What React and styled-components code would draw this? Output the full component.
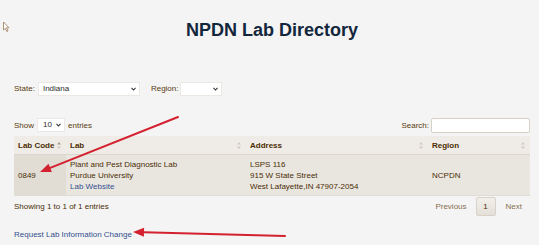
import React from 'react'
import styled, { createGlobalStyle } from 'styled-components'

const GlobalStyle = createGlobalStyle`
  html, body {
    margin: 0;
    padding: 0;
    background: #f4f4f4;
    font-family: "Liberation Sans", Arial, sans-serif;
  }
`

export const Page = styled.div`
  position: relative;
  width: 539px;
  height: 245px;
  box-sizing: border-box;
  padding: 0 9px 0 14px;
  overflow: hidden;
`

export const Title = styled.h1`
  margin: 17px 0 0;
  height: 26px;
  text-align: center;
  font-size: 18px;
  line-height: 26px;
  font-weight: bold;
  color: #12263c;
`

export const FilterRow = styled.div`
  display: flex;
  align-items: center;
  margin-top: 38px;
  height: 15px;
  font-size: 8px;
  color: #5a3a0e;
`

export const Label = styled.span`
  margin-right: ${p => p.gap || 3}px;
`

export const SelectWrap = styled.div`
  position: relative;
  width: ${p => p.w}px;
  height: 14px;
  margin-right: ${p => p.mr || 0}px;
  background: #ffffff;
  border: 1px solid #ece9e4;
  box-sizing: border-box;
  font-size: 8px;
  line-height: 12px;
  color: #2b2b2b;
  padding-left: ${p => p.pl || 3}px;

  svg {
    position: absolute;
    right: 3px;
    top: 4px;
  }
`

export const ControlRow = styled.div`
  display: flex;
  align-items: center;
  justify-content: space-between;
  margin-top: 21px;
  height: 16px;
  font-size: 8px;
  color: #5a3a0e;
`

export const Group = styled.div`
  display: flex;
  align-items: center;
`

export const SearchInput = styled.div`
  width: 99px;
  height: 15px;
  box-sizing: border-box;
  background: #ffffff;
  border: 1px solid #d6d0c6;
  border-radius: 2px;
  margin-left: 2px;
`

export const Table = styled.div`
  margin-top: 3px;
  width: 516px;
  font-size: 8px;
  color: #4a2e05;
`

export const Row = styled.div`
  display: grid;
  grid-template-columns: 52px 180px 182px 102px;
  height: ${p => p.h}px;
  background: ${p => (p.head ? '#efece7' : '#e9e6e0')};
  border-bottom: 1px solid ${p => (p.head ? '#dcd6cc' : '#e0dbd3')};
  font-weight: ${p => (p.head ? 'bold' : 'normal')};
`

export const Cell = styled.div`
  position: relative;
  display: flex;
  flex-direction: column;
  justify-content: center;
  padding: 0 4px;
  line-height: 11px;
  background: ${p => (p.sorted ? '#e1ddd5' : 'transparent')};
  color: ${p => (p.head ? '#4b2c02' : 'inherit')};

  svg {
    position: absolute;
    right: 5px;
    top: 50%;
    margin-top: -3px;
  }
`

export const Link = styled.a`
  color: #34508e;
  text-decoration: none;
`

export const Footer = styled.div`
  display: flex;
  align-items: center;
  justify-content: space-between;
  margin-top: 0;
  height: 20px;
  font-size: 8px;
  color: #4a2e05;
`

export const Pager = styled.div`
  display: flex;
  align-items: center;
  margin-right: 8px;
  color: #86704e;
`

export const PageLink = styled.span`
  margin: 0 ${p => p.m || 0}px;
`

export const PageButton = styled.span`
  display: flex;
  align-items: center;
  justify-content: center;
  width: 20px;
  height: 19px;
  box-sizing: border-box;
  margin: 0 10px 0 9px;
  border: 1px solid #d8d2c8;
  border-radius: 2px;
  background: linear-gradient(#f2efea, #e4e0d8);
  color: #4a2e05;
`

export const RequestLink = styled.a`
  display: block;
  margin-top: 14px;
  font-size: 8px;
  color: #34508e;
  text-decoration: none;
`

export const Overlay = styled.svg`
  position: absolute;
  left: 0;
  top: 0;
  pointer-events: none;
`

const Chevron = () => (
  <svg width="5" height="4" viewBox="0 0 5 4">
    <path d="M0.5 0.8 L2.5 3 L4.5 0.8" fill="none" stroke="#333" strokeWidth="1.1" />
  </svg>
)

const SortIcon = ({ active }) => (
  <svg width="4" height="7" viewBox="0 0 4 7">
    <path d="M2 0 L4 2.5 H0 Z" fill={active ? '#a89c88' : '#d2cbbf'} />
    <path d="M2 7 L4 4.5 H0 Z" fill="#d2cbbf" />
  </svg>
)

const Arrow = ({ x1, y1, x2, y2 }) => {
  const a = Math.atan2(y2 - y1, x2 - x1)
  const len = 11
  const w = 4.5
  const bx = x2 - len * Math.cos(a)
  const by = y2 - len * Math.sin(a)
  const px = -Math.sin(a) * w
  const py = Math.cos(a) * w
  return (
    <g>
      <line x1={x1} y1={y1} x2={bx} y2={by} stroke="#d3212f" strokeWidth="2" strokeLinecap="round" />
      <polygon points={`${x2},${y2} ${bx + px},${by + py} ${bx - px},${by - py}`} fill="#d3212f" />
    </g>
  )
}

export default function App() {
  return (
    <Page>
      <GlobalStyle />
      <Title>NPDN Lab Directory</Title>

      <FilterRow>
        <Label>State:</Label>
        <SelectWrap w={102} mr={11} pl={4}>
          Indiana
          <Chevron />
        </SelectWrap>
        <Label gap={2}>Region:</Label>
        <SelectWrap w={42}>
          <Chevron />
        </SelectWrap>
      </FilterRow>

      <ControlRow>
        <Group>
          <Label>Show</Label>
          <SelectWrap w={28} mr={3} pl={5}>
            10
            <Chevron />
          </SelectWrap>
          <span>entries</span>
        </Group>
        <Group>
          <span>Search:</span>
          <SearchInput />
        </Group>
      </ControlRow>

      <Table>
        <Row head h={18}>
          <Cell head>Lab Code<SortIcon active /></Cell>
          <Cell head>Lab<SortIcon /></Cell>
          <Cell head>Address<SortIcon /></Cell>
          <Cell head>Region<SortIcon /></Cell>
        </Row>
        <Row h={40}>
          <Cell sorted>0849</Cell>
          <Cell>
            <span>Plant and Pest Diagnostic Lab</span>
            <span>Purdue University</span>
            <Link href="#">Lab Website</Link>
          </Cell>
          <Cell>
            <span>LSPS 116</span>
            <span>915 W State Street</span>
            <span>West Lafayette,IN 47907-2054</span>
          </Cell>
          <Cell>NCPDN</Cell>
        </Row>
      </Table>

      <Footer>
        <span>Showing 1 to 1 of 1 entries</span>
        <Pager>
          <PageLink>Previous</PageLink>
          <PageButton>1</PageButton>
          <PageLink>Next</PageLink>
        </Pager>
      </Footer>

      <RequestLink href="#">Request Lab Information Change</RequestLink>

      <Overlay width="539" height="245">
        <path d="M3.5 22 V30 L5.3 28.3 L6.8 31.5 L8 31 L6.6 27.8 H9 Z" fill="#fff" stroke="#9a7a5a" strokeWidth="0.8" />
        <Arrow x1={178} y1={117} x2={40} y2={172} />
        <Arrow x1={285} y1={236} x2={133} y2={232} />
      </Overlay>
    </Page>
  )
}
